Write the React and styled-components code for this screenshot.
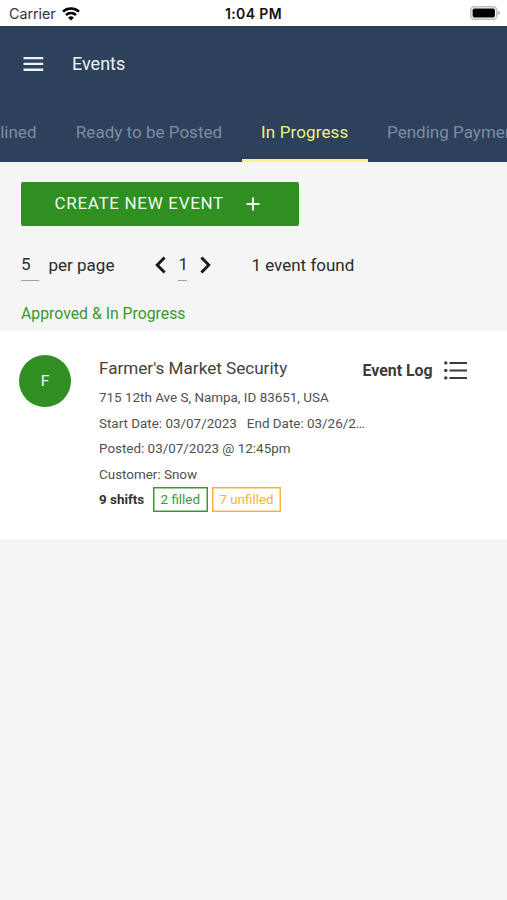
import React from 'react';
import styled, { createGlobalStyle } from 'styled-components';

const GlobalStyle = createGlobalStyle`
  * { box-sizing: border-box; }
  body { margin: 0; background: #f5f5f5; font-family: Roboto, "Liberation Sans", sans-serif; }
  svg { display: block; flex: none; }
`;

const Screen = styled.div`
  width: 507px;
  height: 900px;
  overflow: hidden;
  background: #f5f5f5;
  color: #303030;
`;

const StatusBar = styled.div`
  height: 25.5px;
  padding: 0 7px 0 9px;
  display: grid;
  grid-template-columns: 1fr auto 1fr;
  align-items: center;
  background: #fff;
  color: #111;
  font: 400 14.3px/26px Inter, sans-serif;
`;

const Carrier = styled.div`
  display: flex;
  align-items: center;
  gap: 6px;
  letter-spacing: -0.02px;
  color: #333;
`;

const Clock = styled.div`
  font-weight: 600;
  font-size: 14px;
  padding-top: 1px;
  letter-spacing: 0.4px;
  margin-left: -2px;
`;

const BatterySlot = styled.div`
  display: flex;
  justify-content: flex-end;
  padding-bottom: 1px;
`;

const Header = styled.header`
  height: 136.5px;
  background: #2d415c;
`;

const TitleRow = styled.div`
  height: 76.5px;
  padding-left: 23px;
  display: flex;
  align-items: center;
  gap: 28px;
`;

const PageTitle = styled.h1`
  margin: 0;
  padding-top: 1px;
  font-weight: 400;
  font-size: 18px;
  line-height: 24px;
  color: #eef2f7;
`;

const Tabs = styled.nav`
  height: 60px;
  display: flex;
`;

const Tab = styled.div`
  flex: none;
  display: flex;
  justify-content: ${(p) => p.$align || 'center'};
  width: ${(p) => p.$width}px;
  padding: 0 19.5px;
  line-height: 60px;
  font-size: 17px;
  letter-spacing: ${(p) => (p.$active ? 0.12 : 0.02)}px;
  white-space: nowrap;
  overflow: hidden;
  color: ${(p) => (p.$active ? '#eef283' : '#7e8ca3')};
  border-bottom: ${(p) => (p.$active ? '3px solid #f5f77c' : '0')};
`;

const CreateButton = styled.div`
  width: 278px;
  height: 44px;
  margin: 19.5px 0 0 20.5px;
  padding: 0 38.5px 0 34px;
  display: flex;
  align-items: center;
  justify-content: space-between;
  border-radius: 2px;
  background: #2f8f20;
  color: #f2faf0;
  font-size: 17px;
  letter-spacing: 0.68px;
`;

const ButtonLabel = styled.span`
  padding-bottom: 2px;
`;

const Pager = styled.div`
  height: 36px;
  margin-top: 20.5px;
  padding-left: 21px;
  display: flex;
  align-items: flex-start;
  font-size: 17px;
  line-height: 38px;
  color: #2b2b2b;
`;

const PagerInput = styled.div`
  width: ${(p) => p.$width}px;
  height: 35px;
  line-height: 36px;
  border-bottom: 1px solid #a2a2a2;
`;

const PagerLabel = styled.div`
  margin-left: ${(p) => p.$gap}px;
`;

const Chevron = styled.svg`
  margin: 10px ${(p) => p.$right}px 0 ${(p) => p.$left}px;
`;

const SectionTitle = styled.h2`
  margin: 0;
  padding: 18px 0 0 21px;
  height: 49px;
  font-size: 15.8px;
  font-weight: 400;
  line-height: 28px;
  color: #379a2d;
`;

const Card = styled.article`
  height: 207.5px;
  padding: 24px 40px 0 19px;
  display: flex;
  align-items: flex-start;
  background: #fff;
`;

const Avatar = styled.div`
  flex: none;
  width: 52px;
  height: 52px;
  border-radius: 50%;
  background: #2f8f20;
  color: #f2faf0;
  font-size: 15.5px;
  line-height: 52px;
  text-align: center;
`;

const Details = styled.div`
  flex: none;
  width: 266px;
  margin-left: 28px;
`;

const EventName = styled.h3`
  margin: 0;
  font-size: 17.1px;
  font-weight: 400;
  line-height: 26px;
  height: 29px;
  color: #424242;
`;

const DetailLine = styled.p`
  margin: 0;
  height: 25.7px;
  font-size: 13.43px;
  line-height: 27px;
  white-space: pre;
  overflow: hidden;
  text-overflow: ellipsis;
  color: #505050;
`;

const Shifts = styled.div`
  display: flex;
  align-items: center;
  height: 25px;
  color: #333;
  font-size: 13.4px;
  font-weight: 700;
`;

const ShiftCount = styled.span`
  width: 45px;
  white-space: nowrap;
`;

const Badge = styled.span`
  flex: none;
  width: ${(p) => p.$width}px;
  height: 25px;
  margin-left: ${(p) => p.$gap}px;
  border: 1px solid ${(p) => p.$color};
  box-shadow: inset 0 0 0 0.5px ${(p) => p.$color};
  color: ${(p) => p.$color};
  font-weight: 400;
  line-height: 23px;
  text-align: center;
  white-space: nowrap;
`;

const EventLog = styled.div`
  flex: none;
  width: 104px;
  height: 30px;
  margin-left: -2.5px;
  display: flex;
  align-items: center;
  justify-content: space-between;
  font-size: 15.9px;
  font-weight: 700;
  white-space: nowrap;
  color: #3c3c3c;
`;

const Wifi = () => (
  <svg width="18" height="14" viewBox="0 0 18 14" fill="none" stroke="#000" strokeWidth="2.6">
    <path d="M1 4.6a11.8 11.8 0 0 1 16 0" />
    <path d="M4 8a7.4 7.4 0 0 1 10 0" />
    <path d="M9 13.6 6.1 10.7a4.2 4.2 0 0 1 5.8 0z" fill="#000" stroke="none" />
  </svg>
);

const Battery = () => (
  <svg width="30" height="14" viewBox="0 0 30 14">
    <rect x="0.75" y="0.75" width="26" height="12.5" rx="3.8" fill="#fff" stroke="#bdbdbd" strokeWidth="1.5" />
    <rect x="2.6" y="2.5" width="22.3" height="9" rx="1.8" fill="#000" />
    <path d="M28.2 4.7q1.6.8 1.6 2.3t-1.6 2.3z" fill="#aaa" />
  </svg>
);

const MenuIcon = () => (
  <svg width="21" height="14" viewBox="0 0 21 14" fill="#eef2f7">
    <path d="M.5 0h19.7v2.3H.5zM.5 5.8h19.7v2.3H.5zM.5 11.6h19.7v2.3H.5z" />
  </svg>
);

const PlusIcon = () => (
  <svg width="14" height="14" viewBox="0 0 14 14" stroke="#f2faf0" strokeWidth="1.9">
    <path d="M7 .5v13M.5 7h13" />
  </svg>
);

const ListIcon = () => (
  <svg width="23" height="19" viewBox="0 0 23 19" fill="#3c3c3c">
    <circle cx="1.8" cy="1.9" r="1.7" />
    <circle cx="1.8" cy="9.4" r="1.7" />
    <circle cx="1.8" cy="16.9" r="1.7" />
    <path d="M5.5.9H23v2.1H5.5zM5.5 8.4H23v2.1H5.5zM5.5 15.9H23v2.1H5.5z" />
  </svg>
);

export default function App() {
  return (
    <Screen>
      <GlobalStyle />
      <StatusBar>
        <Carrier>Carrier <Wifi /></Carrier>
        <Clock>1:04 PM</Clock>
        <BatterySlot><Battery /></BatterySlot>
      </StatusBar>
      <Header>
        <TitleRow>
          <MenuIcon />
          <PageTitle>Events</PageTitle>
        </TitleRow>
        <Tabs>
          <Tab $width={56} $align="flex-end">Declined</Tab>
          <Tab $width={186}>Ready to be Posted</Tab>
          <Tab $width={125.5} $active>In Progress</Tab>
          <Tab $width={185} $align="flex-start">Pending Payment</Tab>
        </Tabs>
      </Header>
      <CreateButton><ButtonLabel>CREATE NEW EVENT</ButtonLabel> <PlusIcon /></CreateButton>
      <Pager>
        <PagerInput $width={18}>5</PagerInput>
        <PagerLabel $gap={9.5}>per page</PagerLabel>
        <Chevron $left={41} $right={12} width="11" height="18" viewBox="0 0 11 18" fill="none" stroke="#181818" strokeWidth="2.9">
          <path d="M9.6 1.4 2.2 9l7.4 7.6" />
        </Chevron>
        <PagerInput $width={9}>1</PagerInput>
        <Chevron $left={12.5} $right={0} width="11" height="18" viewBox="0 0 11 18" fill="none" stroke="#181818" strokeWidth="2.9">
          <path d="M1.4 1.4 8.8 9l-7.4 7.6" />
        </Chevron>
        <PagerLabel $gap={40.5}>1 event found</PagerLabel>
      </Pager>
      <SectionTitle>Approved &amp; In Progress</SectionTitle>
      <Card>
        <Avatar>F</Avatar>
        <Details>
          <EventName>Farmer's Market Security</EventName>
          <DetailLine>715 12th Ave S, Nampa, ID 83651, USA</DetailLine>
          <DetailLine>{'Start Date: 03/07/2023   End Date: 03/26/2023'}</DetailLine>
          <DetailLine>Posted: 03/07/2023 @ 12:45pm</DetailLine>
          <DetailLine>Customer: Snow</DetailLine>
          <Shifts>
            <ShiftCount>9 shifts</ShiftCount>
            <Badge $width={54.5} $gap={9} $color="#3a9a31">2 filled</Badge>
            <Badge $width={69} $gap={4.5} $color="#f3b33c">7 unfilled</Badge>
          </Shifts>
        </Details>
        <EventLog>Event Log <ListIcon /></EventLog>
      </Card>
    </Screen>
  );
}
